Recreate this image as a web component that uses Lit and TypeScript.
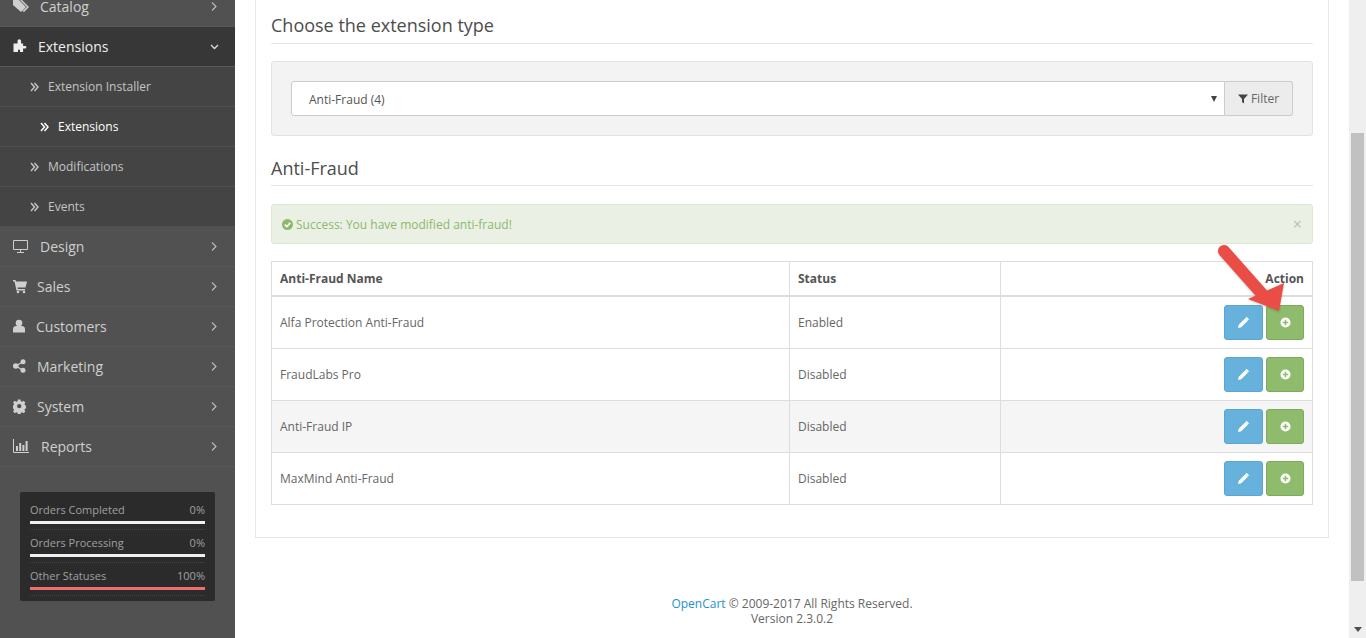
import { LitElement, html, css, svg } from 'lit';
import { customElement } from 'lit/decorators.js';

const chevronRight = svg`<path d="M3 1.500 7 5.500 3 9.500" fill="none" stroke="currentColor" stroke-width="1.200"/>`;
const chevronDown = svg`<path d="M2 4 5.500 7.500 9 4" fill="none" stroke="currentColor" stroke-width="1.300"/>`;

const menuIcons: Record<string, unknown> = {
  catalog: svg`<path d="M0 1h6l7 7-5 5-8-7z M7 1h2l7 7-5 5-1.500-1 4.500-4z" fill="currentColor" fill-rule="evenodd"/>`,
  puzzle: svg`<path d="M4.500 2a1.800 1.800 0 0 1 3.600 0v2.500h2V7h2a1.300 1.300 0 0 1 0 2.600h-2V13H7v-1.500a1 1 0 0 0-2 0V13H.5V4.500h4z" fill="currentColor"/>`,
  design: svg`<path d="M.5 1.500h14v9H.5z M4 13.500h7 M7.500 11v2" fill="none" stroke="currentColor" stroke-width="1"/>`,
  sales: svg`<path d="M0 1h2.500l.5 1.500H14l-1.500 6H4.500l.4 1.500H12v1.500H3.500L1.500 2.500H0z" fill="currentColor"/><circle cx="5" cy="13" r="1.300" fill="currentColor"/><circle cx="11" cy="13" r="1.300" fill="currentColor"/>`,
  user: svg`<circle cx="6" cy="4" r="3.300" fill="currentColor"/><path d="M0 13.500V10c0-2 1.500-3 3-3h6c1.500 0 3 1 3 3v3.500z" fill="currentColor"/>`,
  share: svg`<circle cx="2.800" cy="7" r="2.800" fill="currentColor"/><circle cx="10" cy="2.800" r="2.500" fill="currentColor"/><circle cx="10" cy="11.200" r="2.500" fill="currentColor"/><path d="M2.800 7 10 2.800M2.800 7 10 11.200" stroke="currentColor" stroke-width="1.300"/>`,
  cog: svg`<path fill="currentColor" fill-rule="evenodd" d="M5 0h3l.4 2 1.400.6 1.700-1.100 2 2-1.100 1.700.6 1.400 2 .4v3l-2 .4-.6 1.400 1.100 1.700-2 2-1.700-1.100-1.400.6-.4 2H5l-.4-2-1.400-.6-1.700 1.100-2-2 1.100-1.700-.6-1.400-2-.4v-3l2-.4.6-1.400L-.5 3.500l2-2 1.700 1.100L4.600 2zM6.500 5a2.500 2.500 0 1 0 0 5 2.500 2.500 0 0 0 0-5z" transform="translate(.5 .5) scale(.88)"/>`,
  chart: svg`<path d="M.5 0v13.500H16" fill="none" stroke="currentColor"/><path d="M3 7h2v5H3zM6.200 4h2v8h-2zM9.400 6h2v6h-2zM12.600 2h2v10h-2z" fill="currentColor"/>`,
};

const menu = [
  { label: 'Design', icon: 'design', w: 15, gap: 12 },
  { label: 'Sales', icon: 'sales', w: 14, gap: 10 },
  { label: 'Customers', icon: 'user', w: 12, gap: 11 },
  { label: 'Marketing', icon: 'share', w: 13, gap: 11 },
  { label: 'System', icon: 'cog', w: 13, gap: 11 },
  { label: 'Reports', icon: 'chart', w: 16, gap: 12 },
];

const stats = [
  { label: 'Orders Completed', value: '0%', color: '#f0f0f0' },
  { label: 'Orders Processing', value: '0%', color: '#f0f0f0' },
  { label: 'Other Statuses', value: '100%', color: '#ee6e6e' },
];

const rows = [
  { name: 'Alfa Protection Anti-Fraud', status: 'Enabled' },
  { name: 'FraudLabs Pro', status: 'Disabled' },
  { name: 'Anti-Fraud IP', status: 'Disabled' },
  { name: 'MaxMind Anti-Fraud', status: 'Disabled' },
];

@customElement('app-root')
export class AppRoot extends LitElement {
  static styles = css`
    :host {
      display: block;
      height: 638px;
      overflow: hidden;
      position: relative;
      background: #fff;
      font-family: 'Open Sans', sans-serif;
      font-size: 12px;
      color: #666;
    }
    .page {
      display: flex;
      height: 638px;
    }

    /* sidebar */
    .side {
      width: 235px;
      flex: none;
      background: #515151;
      overflow: hidden;
    }
    .menu {
      margin-top: -13px;
    }
    .item {
      height: 39px;
      border-bottom: 1px solid #585858;
      display: flex;
      align-items: center;
      padding: 0 15px 0 13px;
      font-size: 14px;
      color: #cfcfcf;
    }
    .item svg.ico {
      flex: none;
      height: 15px;
    }
    .item .lbl {
      flex: 1;
    }
    .item svg.chev {
      width: 11px;
      height: 11px;
      color: #bbb;
      flex: none;
    }
    .item.open {
      background: #373737;
      color: #eee;
      border-bottom-color: #585858;
    }
    .item.open svg.chev {
      color: #ddd;
    }
    .sub {
      background: #444;
    }
    .sub-item {
      height: 39px;
      border-bottom: 1px solid #505050;
      display: flex;
      align-items: center;
      gap: 9px;
      padding-left: 30px;
      color: #c4c4c4;
      font-size: 12px;
    }
    .sub-item.on {
      padding-left: 40px;
      color: #fff;
    }
    .sub-item svg {
      width: 9px;
      height: 10px;
    }

    .stats {
      margin: 25px 20px 0;
      background: #2b2b2b;
      border-radius: 2px;
      padding: 5px 10px 0;
      height: 109px;
      box-sizing: border-box;
    }
    .stat {
      height: 32px;
      border-bottom: 1px dotted #444;
      box-sizing: content-box;
    }
    .stat-top {
      display: flex;
      justify-content: space-between;
      font-size: 11px;
      line-height: 15px;
      padding-top: 5px;
      color: #a0a0a0;
    }
    .bar {
      height: 3px;
      margin-top: 4px;
    }

    /* main column */
    .main {
      flex: 1;
      min-width: 0;
      display: flex;
      flex-direction: column;
      padding: 0 20px;
    }
    .panel {
      height: 538px;
      box-sizing: border-box;
      border: 1px solid #e8e8e8;
      border-top: none;
      padding: 0 15px;
    }
    h3 {
      margin: 0;
      font-size: 18px;
      font-weight: 400;
      color: #4d4d4d;
      line-height: 24px;
      padding-top: 13px;
      padding-bottom: 6px;
      border-bottom: 1px solid #e5e5e5;
    }
    .well {
      margin-top: 17px;
      height: 75px;
      box-sizing: border-box;
      background: #f3f3f3;
      border: 1px solid #e3e3e3;
      border-radius: 3px;
      padding: 19px;
      display: flex;
    }
    .select {
      flex: 1;
      height: 35px;
      box-sizing: border-box;
      background: #fff;
      border: 1px solid #ccc;
      border-radius: 3px 0 0 3px;
      display: flex;
      align-items: center;
      justify-content: space-between;
      padding: 2px 7px 0 17px;
      color: #555;
    }
    .caret {
      width: 0;
      height: 0;
      margin-bottom: 2px;
      border-left: 3px solid transparent;
      border-right: 3px solid transparent;
      border-top: 6px solid #444;
    }
    .filter {
      width: 68px;
      height: 35px;
      box-sizing: border-box;
      background: #ececec;
      border: 1px solid #ccc;
      border-left: none;
      border-radius: 0 3px 3px 0;
      display: flex;
      align-items: center;
      justify-content: center;
      gap: 3px;
      color: #666;
    }
    .filter svg {
      width: 10px;
      height: 10px;
    }
    .second {
      margin-top: 20px;
      padding-top: 0;
      padding-bottom: 5px;
    }
    .alert {
      margin-top: 18px;
      height: 40px;
      box-sizing: border-box;
      background: #eaf1e4;
      border: 1px solid #dde8d3;
      border-radius: 3px;
      display: flex;
      align-items: center;
      padding: 0 10px;
      gap: 3px;
      color: #8cb96b;
      position: relative;
    }
    .alert svg {
      width: 11px;
      height: 11px;
    }
    .close {
      position: absolute;
      right: 10px;
      top: 10px;
      font-size: 16px;
      line-height: 18px;
      color: #bbb;
    }
    table {
      margin-top: 17px;
      width: 100%;
      border-collapse: collapse;
      table-layout: fixed;
      color: #666;
    }
    th, td {
      border: 1px solid #ddd;
      padding: 0 8px;
      text-align: left;
    }
    th {
      height: 34px;
      box-sizing: border-box;
      border-bottom-width: 2px;
      font-weight: 700;
      color: #555;
    }
    td {
      height: 51px;
    }
    tr.alt td {
      background: #f5f5f5;
    }
    .right {
      text-align: right;
    }
    .btns {
      display: flex;
      justify-content: flex-end;
      gap: 3px;
    }
    .btn {
      width: 39px;
      height: 35px;
      box-sizing: border-box;
      border-radius: 3px;
      display: flex;
      align-items: center;
      justify-content: center;
    }
    .btn.edit {
      background: #67b2dd;
      border: 1px solid #5ba6d1;
    }
    .btn.add {
      width: 38px;
      background: #8fbb6c;
      border: 1px solid #7fa95f;
    }
    .btn svg {
      width: 11px;
      height: 11px;
    }
    footer {
      text-align: center;
      padding-top: 58px;
      line-height: 15px;
      color: #666;
    }
    footer a {
      color: #1e91cf;
      text-decoration: none;
    }

    /* scrollbar */
    .scroll {
      width: 17px;
      flex: none;
      background: #efefef;
      position: relative;
    }
    .thumb {
      position: absolute;
      left: 2px;
      right: 2px;
      top: 133px;
      height: 448px;
      background: #c1c1c1;
    }
    .scroll-down {
      position: absolute;
      left: 5px;
      bottom: 6px;
      width: 0;
      height: 0;
      border-left: 4px solid transparent;
      border-right: 4px solid transparent;
      border-top: 5px solid #505050;
    }

    .arrow {
      position: absolute;
      left: 1215px;
      top: 243px;
      width: 72px;
      height: 72px;
      filter: drop-shadow(0 1px 1px rgba(0, 0, 0, 0.2));
    }
  `;

  renderIcon(name: string, w: number, gap: number) {
    return html`<svg class="ico" style="width:${w}px;margin-right:${gap}px" viewBox="0 0 ${w} 15">${menuIcons[name]}</svg>`;
  }

  render() {
    return html`
      <div class="page">
        <aside class="side">
          <div class="menu">
            <div class="item">${this.renderIcon('catalog', 16, 11)}<span class="lbl">Catalog</span><svg class="chev" viewBox="0 0 11 11">${chevronRight}</svg></div>
            <div class="item open">${this.renderIcon('puzzle', 14, 11)}<span class="lbl">Extensions</span><svg class="chev" viewBox="0 0 11 11">${chevronDown}</svg></div>
            <div class="sub">
              ${['Extension Installer', 'Extensions', 'Modifications', 'Events'].map(
                (s, i) => html`<div class="sub-item ${i === 1 ? 'on' : ''}">
                  <svg viewBox="0 0 9 10"><path d="M1 1l3.500 4L1 9M4.500 1 8 5 4.500 9" fill="none" stroke="currentColor" stroke-width="1.500"/></svg>${s}
                </div>`,
              )}
            </div>
            ${menu.map(
              (m) => html`<div class="item">${this.renderIcon(m.icon, m.w, m.gap)}<span class="lbl">${m.label}</span><svg class="chev" viewBox="0 0 11 11">${chevronRight}</svg></div>`,
            )}
          </div>
          <div class="stats">
            ${stats.map(
              (s) => html`<div class="stat">
                <div class="stat-top"><span>${s.label}</span><span>${s.value}</span></div>
                <div class="bar" style="background:${s.color}"></div>
              </div>`,
            )}
          </div>
        </aside>

        <main class="main">
          <section class="panel">
            <h3>Choose the extension type</h3>
            <div class="well">
              <div class="select"><span>Anti-Fraud (4)</span><span class="caret"></span></div>
              <div class="filter">
                <svg viewBox="0 0 10 10"><path d="M0 .5h10L6 5v4.500L4 8V5z" fill="#444"/></svg>Filter
              </div>
            </div>
            <h3 class="second">Anti-Fraud</h3>
            <div class="alert">
              <svg viewBox="0 0 12 12"><circle cx="6" cy="6" r="6" fill="#8cb96b"/><path d="M3 6l2.200 2.200L9 4.200" fill="none" stroke="#fff" stroke-width="1.700"/></svg>
              Success: You have modified anti-fraud!
              <span class="close">×</span>
            </div>
            <table>
              <colgroup><col style="width:518px" /><col style="width:211px" /><col /></colgroup>
              <thead>
                <tr><th>Anti-Fraud Name</th><th>Status</th><th class="right">Action</th></tr>
              </thead>
              <tbody>
                ${rows.map(
                  (r, i) => html`<tr class="${i === 2 ? 'alt' : ''}">
                    <td>${r.name}</td>
                    <td>${r.status}</td>
                    <td>
                      <div class="btns">
                        <span class="btn edit"><svg viewBox="0 0 12 12"><path d="M0 12l.8-3.500L8 1.300 10.700 4 3.500 11.200zM9 .4l.6-.4 2.400 2.400-.4.6-.8.800L8.100 1.200z" fill="#fff"/></svg></span>
                        <span class="btn add"><svg viewBox="0 0 12 12"><circle cx="6" cy="6" r="5.500" fill="#fff"/><path d="M6 3v6M3 6h6" stroke="#8fbb6c" stroke-width="1.700"/></svg></span>
                      </div>
                    </td>
                  </tr>`,
                )}
              </tbody>
            </table>
          </section>
          <footer><a>OpenCart</a> © 2009-2017 All Rights Reserved.<br />Version 2.3.0.2</footer>
        </main>

        <div class="scroll"><div class="thumb"></div><div class="scroll-down"></div></div>
      </div>
      <svg class="arrow" viewBox="0 0 72 72">
        <path d="M9 8 L48 52" stroke="#ea4c46" stroke-width="12" stroke-linecap="round" fill="none"/>
        <path d="M33 56 L69 40 L64 68 Z" fill="#ea4c46"/>
      </svg>
    `;
  }
}
